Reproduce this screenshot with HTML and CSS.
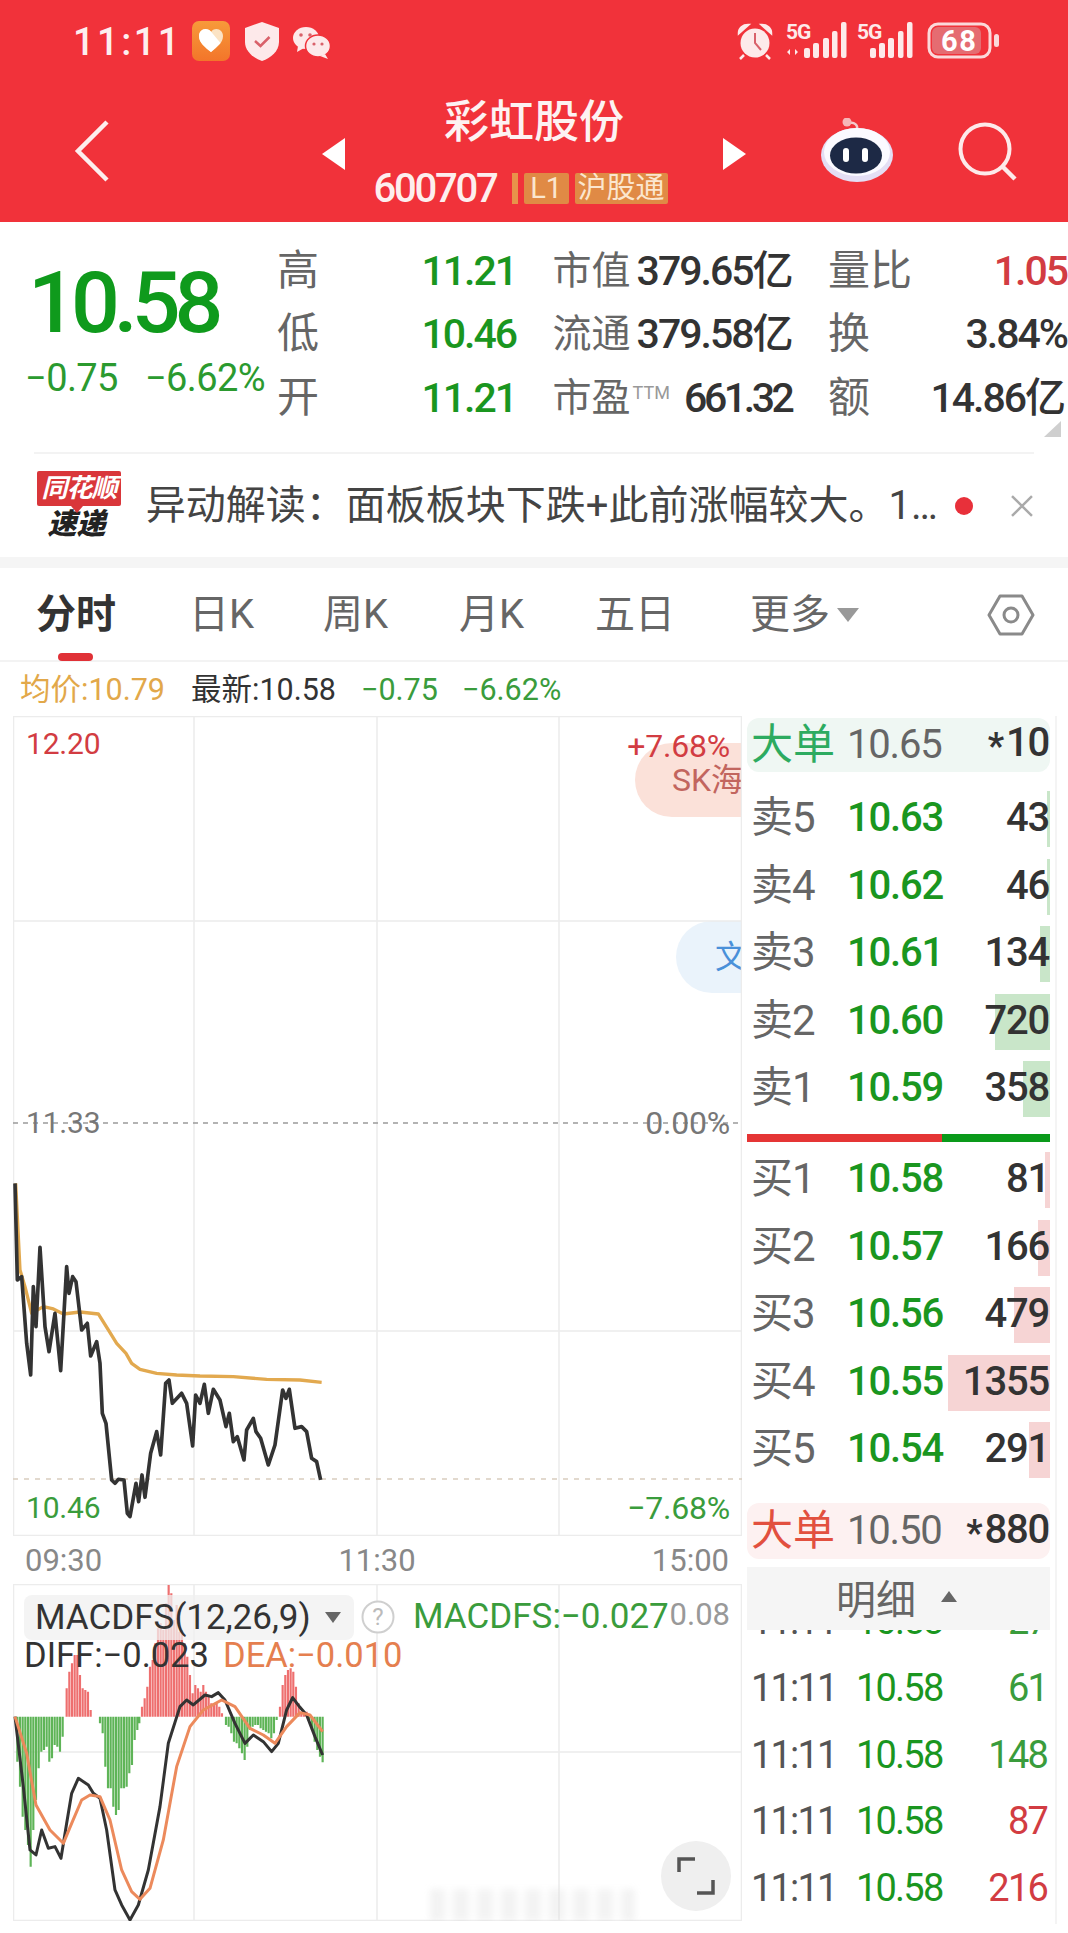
FILE: index.html
```html
<!DOCTYPE html>
<html lang="zh">
<head>
<meta charset="utf-8">
<title>彩虹股份</title>
<link rel="stylesheet" href="styles.css">
</head>
<body>
<div class="page">
  <header class="header">
    <div class="status">
      <span class="clock">11:11</span>
      <svg class="st-left" viewBox="190 18 142 46" width="142" height="46">
        <defs><linearGradient id="og" x1="0" y1="0" x2="0" y2="1"><stop offset="0" stop-color="#f79a3a"/><stop offset="1" stop-color="#f3752a"/></linearGradient></defs>
        <rect x="192" y="21" width="38" height="40" rx="7" fill="url(#og)"/>
        <path d="M211 52c-6-5-12-9-12-16 0-4 3-7 6.500-7 2.500 0 4.500 1 5.500 3 1-2 3-3 5.500-3 3.500 0 6.500 3 6.500 7 0 7-6 11-12 16z" fill="#fbe3c4"/>
        <path d="M211 52c-6-5-12-9-12-16 0-4 3-7 6.500-7 2 0 4 1 5 2l10 12c-3 3-6 6-9.500 9z" fill="#fff"/>
        <path d="M262 22l17 6v14c0 9-8 16-17 19-9-3-17-10-17-19V28z" fill="#fde9ea"/>
        <path d="M255 41l5.500 5 9-9" fill="none" stroke="#d9616a" stroke-width="2.500"/>
        <ellipse cx="306" cy="38" rx="13" ry="11" fill="#fde9ea"/>
        <path d="M298 46l-1 6 7-4z" fill="#fde9ea"/>
        <ellipse cx="318" cy="46" rx="12.500" ry="11" fill="#fde9ea" stroke="#f1323a" stroke-width="1.500"/>
        <path d="M325 54l3 5-8-3z" fill="#fde9ea"/>
        <circle cx="301" cy="35" r="1.800" fill="#d9616a"/><circle cx="310" cy="35" r="1.800" fill="#d9616a"/>
        <circle cx="314" cy="44" r="1.600" fill="#d9616a"/><circle cx="322" cy="44" r="1.600" fill="#d9616a"/>
      </svg>
      <svg class="st-right" viewBox="735 18 268 46" width="268" height="46">
        <circle cx="755" cy="43" r="14.500" fill="#fdeaea"/>
        <path d="M755 33v10l6 7" fill="none" stroke="#d9616a" stroke-width="2"/>
        <path d="M739 33c0-5 4-8 9-8zM771 33c0-5-4-8-9-8zM744 55l-4 4M766 55l4 4" fill="#fdeaea" stroke="#fdeaea" stroke-width="2.500"/>
        <text class="st-5g" x="786" y="39">5G</text>
        <path d="M790 49l-3 3 3 3zM795 49l3 3-3 3z" fill="#fdeaea"/>
        <g fill="#fdeaea">
          <rect x="804" y="48" width="6" height="10" rx="2"/><rect x="813" y="43" width="6" height="15" rx="2"/><rect x="823" y="38" width="6" height="20" rx="2"/><rect x="832" y="31" width="5.500" height="27" rx="2"/><rect x="841" y="22" width="5.500" height="36" rx="2"/>
          <rect x="870" y="48" width="6" height="10" rx="2"/><rect x="879" y="43" width="6" height="15" rx="2"/><rect x="888" y="38" width="6" height="20" rx="2"/><rect x="898" y="31" width="5.500" height="27" rx="2"/><rect x="907" y="22" width="5.500" height="36" rx="2"/>
        </g>
        <text class="st-5g" x="857" y="39">5G</text>
        <rect x="929" y="24" width="61" height="33" rx="9" fill="none" stroke="#fbd9da" stroke-width="3"/>
        <rect x="932" y="27" width="49" height="27" rx="6" fill="#e56c71"/>
        <text class="st-bat" x="941" y="51">68</text>
        <rect x="994" y="34" width="5" height="13" rx="2.500" fill="#fbd9da"/>
      </svg>
    </div>
    <div class="nav">
      <svg class="back" viewBox="0 0 36 62" width="36" height="62"><path d="M33 2L4 31l29 29" fill="none" stroke="#fdeeee" stroke-width="4.500"/></svg>
      <span class="tri tri-l"></span>
      <div class="nav-mid">
        <div class="title">彩虹股份</div>
        <div class="coderow">
          <span class="code">600707</span>
          <span class="code-bar"></span>
          <span class="badge badge-l1">L1</span>
          <span class="badge">沪股通</span>
        </div>
      </div>
      <span class="tri tri-r"></span>
      <svg class="robot" viewBox="821 118 72 66" width="72" height="66">
        <path d="M857 129c1-4-3-7-7-6" fill="none" stroke="#f3c9cc" stroke-width="2.500"/>
        <circle cx="847" cy="122" r="4.500" fill="#f6b6b8"/>
        <ellipse cx="857" cy="155" rx="36" ry="27" fill="#e4def4"/>
        <ellipse cx="857" cy="152" rx="33" ry="24" fill="#fbfaff"/>
        <ellipse cx="856" cy="155.500" rx="26" ry="18" fill="#1d2945"/>
        <rect x="843" y="148" width="6" height="14" rx="3" fill="#fff"/>
        <rect x="862" y="148" width="6" height="14" rx="3" fill="#fff"/>
      </svg>
      <svg class="search" viewBox="955 120 62 64" width="62" height="64">
        <circle cx="984" cy="150" r="24.500" fill="none" stroke="#fdeaea" stroke-width="4"/>
        <path d="M1001 167l13 13" stroke="#fdeaea" stroke-width="4.500"/>
      </svg>
    </div>
  </header>

  <section class="quote">
    <div class="q-left">
      <div class="q-price">10.58</div>
      <div class="q-change"><span>−0.75</span><span>−6.62%</span></div>
    </div>
    <div class="q-grid">
      <div class="cell"><span class="lab">高</span><span class="val grn">11.21</span></div>
      <div class="cell"><span class="lab lab-s">市值</span><span class="val">379.65亿</span></div>
      <div class="cell cell-over"><span class="lab">量比</span><span class="val red">1.05</span></div>
      <div class="cell"><span class="lab">低</span><span class="val grn">10.46</span></div>
      <div class="cell"><span class="lab lab-s">流通</span><span class="val">379.58亿</span></div>
      <div class="cell cell-over"><span class="lab">换</span><span class="val">3.84%</span></div>
      <div class="cell"><span class="lab">开</span><span class="val grn">11.21</span></div>
      <div class="cell"><span class="lab lab-s">市盈<sup class="ttm">TTM</sup></span><span class="val val-tight">661.32</span></div>
      <div class="cell cell-edge"><span class="lab">额</span><span class="val">14.86亿</span></div>
    </div>
    <span class="corner"></span>
  </section>

  <section class="news">
    <div class="logo">
      <div class="logo-top">同花顺</div>
      <div class="logo-bot">速递</div>
    </div>
    <div class="news-text">异动解读：面板板块下跌+此前涨幅较大。1…</div>
    <span class="dot"></span>
    <svg class="close" viewBox="0 0 24 24" width="24" height="24"><path d="M2 2l20 20M22 2L2 22" stroke="#aaa" stroke-width="2.500"/></svg>
  </section>
  <div class="band"></div>

  <nav class="tabs">
    <span class="tab active">分时</span>
    <span class="tab">日K</span>
    <span class="tab">周K</span>
    <span class="tab">月K</span>
    <span class="tab">五日</span>
    <span class="tab">更多<i class="tab-tri"></i></span>
    <svg class="hex" viewBox="0 0 48 44" width="48" height="44">
      <path d="M13 3h22l11 19-11 19H13L2 22z" fill="none" stroke="#8a8a8a" stroke-width="3" stroke-linejoin="round"/>
      <circle cx="24" cy="22" r="7" fill="none" stroke="#8a8a8a" stroke-width="3"/>
    </svg>
  </nav>

  <div class="info">
    <span class="avg">均价:10.79</span>
    <span class="latest">最新:10.58</span>
    <span class="grn2">−0.75</span>
    <span class="grn2">−6.62%</span>
  </div>

  <main class="main">
    <div class="left">
      <div class="chart">
        <div class="bubble bubble-sk">SK海</div>
        <div class="bubble bubble-wen">文</div>
        <svg class="plot" viewBox="13 716 729 820" width="729" height="820">
          <g stroke="#ececec" stroke-width="1.500" fill="none">
            <path d="M13 716.500H742M13 921H742M13 1331H742M13 1535.500H742M13.500 716V1536M194 716V1536M377 716V1536M559 716V1536M741.500 716V1536"/>
          </g>
          <path d="M13 1123H742" stroke="#9a9a9a" stroke-width="1.500" stroke-dasharray="5 5"/>
          <path d="M13 1479H742" stroke="#d9cdbf" stroke-width="1.500" stroke-dasharray="5 6"/>
          <g transform="translate(0 1160) scale(.3333)" fill="none" stroke-linejoin="round">
            <polyline stroke="#e2a94f" stroke-width="10" points="47,70 60,330 75,380 95,460 130,440 160,447 190,462 240,456 295,462 325,510 350,550 378,580 395,610 420,628 470,640 530,645 600,648 700,650 800,658 900,660 965,667"/>
            <polyline stroke="#333" stroke-width="11" points="45,70 52,360 65,350 80,550 92,645 100,380 108,500 120,262 135,500 147,575 165,460 182,632 200,320 207,400 218,350 228,365 245,510 262,490 272,588 290,545 300,610 307,760 318,790 335,960 345,970 355,958 372,960 382,1060 390,1070 408,970 416,1025 426,945 435,1012 452,880 470,815 482,885 497,670 507,660 517,730 545,700 560,730 578,858 587,705 600,730 613,673 625,760 640,688 660,720 678,800 688,760 700,845 712,830 732,900 740,810 760,775 768,815 782,835 805,915 825,855 848,690 858,715 868,688 885,805 905,800 920,815 935,895 950,905 962,960"/>
          </g>
        </svg>
        <span class="pl pl-1220 red">12.20</span>
        <span class="pr pr-top red">+7.68%</span>
        <span class="pl pl-mid">11.33</span>
        <span class="pr pr-mid">0.00%</span>
        <span class="pl pl-low grn2">10.46</span>
        <span class="pr pr-low grn2">−7.68%</span>
      </div>
      <div class="times"><span>09:30</span><span>11:30</span><span>15:00</span></div>
      <div class="macd">
        <svg class="plot" viewBox="13 1584 729 337" width="729" height="337">
          <path d="M13 1584.500H742M13 1752H742M13 1920.500H742M13.500 1584V1921M194 1584V1921M377 1584V1921M559 1584V1921M741.500 1584V1921" stroke="#ececec" stroke-width="1.500" fill="none"/>
          <g transform="translate(0 1560) scale(.3333)" fill="none">
            <path stroke="#5eb457" stroke-width="6.500" d="M52 470V605M60 470V680M68 470V770M76 470V810M84 470V855M92 470V920M100 470V810M108 470V720M116 470V625M124 470V575M132 470V570M140 470V560M148 470V605M156 470V595M164 470V555M172 470V560M180 470V575M188 470V530M300 470V490M308 470V520M316 470V620M324 470V685M332 470V685M340 470V740M348 470V765M356 470V750M364 470V685M372 470V685M380 470V680M388 470V640M396 470V615M404 470V540M412 470V510M418 470V490M678 470V495M686 470V500M694 470V520M702 470V545M710 470V550M718 470V565M726 470V580M734 470V600M742 470V560M750 470V510M758 470V500M766 470V495M774 470V495M782 470V505M790 470V510M798 470V515M806 470V520M814 470V535M822 470V520M830 470V480M928 470V480M936 470V510M944 470V545M952 470V570M960 470V590M968 470V607"/>
            <path stroke="#ee6f6f" stroke-width="6.500" d="M200 470V385M208 470V335M216 470V310M224 470V285M232 470V285M240 470V345M248 470V385M256 470V390M264 470V395M272 470V450M426 470V440M434 470V415M442 470V380M450 470V320M458 470V300M466 470V250M474 470V205M482 470V190M490 470V210M498 470V130M506 470V75M514 470V100M522 470V180M530 470V135M538 470V215M546 470V210M554 470V250M562 470V290M570 470V345M578 470V400M586 470V375M594 470V385M602 470V395M610 470V375M618 470V395M626 470V410M634 470V430M642 470V430M650 470V430M658 470V440M666 470V460M840 470V440M848 470V375M856 470V345M864 470V330M872 470V325M880 470V335M888 470V380M896 470V430M904 470V455M912 470V455M920 470V455"/>
            <polyline stroke="#333" stroke-width="9" stroke-linejoin="round" points="45,470 70,680 90,870 108,885 125,810 145,865 165,860 183,895 200,790 215,700 235,655 265,675 280,700 300,715 320,810 345,990 365,1035 390,1080 415,1035 445,930 480,740 505,550 540,440 560,420 580,435 615,405 635,410 655,398 675,420 705,490 735,550 760,525 790,545 815,575 835,550 860,450 878,413 900,442 920,465 945,530 968,585"/>
            <polyline stroke="#ec8a5c" stroke-width="9" stroke-linejoin="round" points="45,470 80,580 108,735 150,810 190,850 215,790 245,720 270,705 300,710 330,780 365,930 395,995 420,1018 450,985 490,840 530,620 570,500 610,450 665,420 705,440 750,505 790,525 825,550 860,500 900,458 930,465 968,515"/>
          </g>
        </svg>
        <div class="pill"><span>MACDFS(12,26,9)</span><i class="pill-tri"></i></div>
        <svg class="qmark" viewBox="0 0 34 34" width="34" height="34"><circle cx="17" cy="17" r="15.500" fill="#fff" stroke="#cfcfcf" stroke-width="2"/><text class="q-text" x="17" y="25">?</text></svg>
        <span class="m-green">MACDFS:−0.027</span>
        <span class="m-max">0.08</span>
        <span class="m-diff">DIFF:−0.023</span>
        <span class="m-dea">DEA:−0.010</span>
        <div class="wm"></div>
        <div class="expand">
          <svg viewBox="0 0 38 38" width="38" height="38"><path d="M2 15V2h16M36 23v13H20" fill="none" stroke="#555" stroke-width="3.500"/></svg>
        </div>
      </div>
    </div>

    <aside class="panel">
      <div class="big big-g"><span class="big-l">大单</span><span class="px gray">10.65</span><span class="vol"><b class="star">*</b>10</span></div>
      <div class="book book-s">
        <div class="row"><i class="vbar vbar-g" style="width:3px"></i><span class="r-l">卖5</span><span class="px">10.63</span><span class="vol">43</span></div>
        <div class="row"><i class="vbar vbar-g" style="width:3px"></i><span class="r-l">卖4</span><span class="px">10.62</span><span class="vol">46</span></div>
        <div class="row"><i class="vbar vbar-g" style="width:10px"></i><span class="r-l">卖3</span><span class="px">10.61</span><span class="vol">134</span></div>
        <div class="row"><i class="vbar vbar-g" style="width:55px"></i><span class="r-l">卖2</span><span class="px">10.60</span><span class="vol">720</span></div>
        <div class="row"><i class="vbar vbar-g" style="width:27px"></i><span class="r-l">卖1</span><span class="px">10.59</span><span class="vol">358</span></div>
      </div>
      <div class="ratio"><i class="ratio-r"></i><i class="ratio-g"></i></div>
      <div class="book book-b">
        <div class="row"><i class="vbar vbar-r" style="width:5px"></i><span class="r-l">买1</span><span class="px">10.58</span><span class="vol">81</span></div>
        <div class="row"><i class="vbar vbar-r" style="width:12px"></i><span class="r-l">买2</span><span class="px">10.57</span><span class="vol">166</span></div>
        <div class="row"><i class="vbar vbar-r" style="width:36px"></i><span class="r-l">买3</span><span class="px">10.56</span><span class="vol">479</span></div>
        <div class="row"><i class="vbar vbar-r" style="width:102px"></i><span class="r-l">买4</span><span class="px">10.55</span><span class="vol">1355</span></div>
        <div class="row"><i class="vbar vbar-r" style="width:21px"></i><span class="r-l">买5</span><span class="px">10.54</span><span class="vol">291</span></div>
      </div>
      <div class="big big-r"><span class="big-l">大单</span><span class="px gray">10.50</span><span class="vol"><b class="star">*</b>880</span></div>
      <div class="detail"><span>明细</span><i class="detail-tri"></i></div>
      <div class="ticks">
        <div class="tick tick-cut"><span class="t">11:11</span><span class="p">10.58</span><span class="v grn2">27</span></div>
        <div class="tick"><span class="t">11:11</span><span class="p">10.58</span><span class="v grn2">61</span></div>
        <div class="tick"><span class="t">11:11</span><span class="p">10.58</span><span class="v grn2">148</span></div>
        <div class="tick"><span class="t">11:11</span><span class="p">10.58</span><span class="v red">87</span></div>
        <div class="tick"><span class="t">11:11</span><span class="p">10.58</span><span class="v red">216</span></div>
      </div>
    </aside>
  </main>
</div>
</body>
</html>
```
FILE: styles.css
```css
* { box-sizing: border-box; }
html, body { margin: 0; padding: 0; background: #fff; }
body { font-family: Roboto, "Noto Sans CJK SC", sans-serif; color: #333; }
i { display: block; font-style: normal; }
.page { width: 1068px; height: 1933px; overflow: hidden; position: relative; }
.grn2 { color: #3a9c3c; }
.red { color: #d23c42; }
.gray { color: #666; }

/* header */
.header { height: 222px; background: #f1323a; color: #fdeeee; }
.status { height: 86px; display: flex; align-items: flex-start; padding: 17px 0 0 73px; }
.clock { width: 117px; font-size: 38px; line-height: 50px; letter-spacing: 2.5px; font-weight: 500; }
.st-left { margin-left: 0; display: block; margin-top: 1px; }
.st-right { margin-left: 403px; display: block; margin-top: 1px; }
.st-5g { font: 700 21px Roboto, sans-serif; fill: #fdeaea; letter-spacing: -1px; }
.st-bat { font: 700 29px Roboto, sans-serif; fill: #fff; letter-spacing: 1.5px; }
.nav { height: 136px; display: flex; align-items: center; padding-bottom: 6px; }
.back { margin-left: 74px; display: block; }
.tri { width: 0; height: 0; border-top: 16.5px solid transparent; border-bottom: 16.5px solid transparent; margin-top: 6px; }
.tri-l { margin-left: 212px; border-right: 23px solid #fff; }
.tri-r { border-left: 23px solid #fff; }
.nav-mid { width: 378px; align-self: flex-start; display: flex; flex-direction: column; align-items: center; padding-top: 12px; }
.title { font-size: 45px; line-height: 50px; font-weight: 500; color: #fdf2f2; }
.coderow { display: flex; align-items: center; height: 31px; margin-top: 25px; padding-right: 27px; }
.code { font-size: 40px; line-height: 31px; letter-spacing: -2.2px; margin-right: 15px; font-weight: 500; }
.code-bar { width: 6px; height: 31px; background: #e8934a; margin-right: 6px; }
.badge { height: 31px; line-height: 31px; background: #e08a45; color: #fbe6cf; font-size: 29px; padding: 0 3px; border-radius: 2px; width: 93px; text-align: center; letter-spacing: 0; }
.badge-l1 { width: 45px; margin-right: 6px; font-size: 29px; }
.robot { margin-left: 75px; display: block; }
.search { margin-left: 63px; display: block; }

/* quote */
.quote { height: 230px; position: relative; display: flex; padding-top: 17px; }
.q-left { width: 279px; padding: 20px 0 0 25px; }
.q-price { font-size: 86px; line-height: 88px; letter-spacing: -6px; color: #0f9a1c; padding-left: 3px; font-weight: 500; }
.q-change { display: flex; justify-content: space-between; width: 240px; margin-top: 9px; font-size: 38px; line-height: 44px; letter-spacing: -.6px; color: #2b9a2f; }
.q-grid { display: grid; grid-template-columns: repeat(3, 237px); column-gap: 38.5px; grid-auto-rows: 63.5px; }
.cell { display: flex; justify-content: space-between; align-items: center; white-space: nowrap; }
.cell-edge { padding-right: 3px; }
.lab { font-size: 42px; color: #666; line-height: 48px; margin-left: -2px; }
.lab-s { font-size: 39px; }
.val { font-size: 41px; letter-spacing: -2px; line-height: 48px; color: #333; font-weight: 500; }
.val.grn { color: #1a961f; }
.val.red { color: #d23c42; }
.val-tight { letter-spacing: -3.4px; }
.ttm { font-size: 18px; color: #999; vertical-align: 12px; line-height: 0; margin-left: 2px; }
.corner { position: absolute; right: 7px; bottom: 15px; width: 17px; height: 16px; background: #cfcfcf; clip-path: polygon(100% 0, 100% 100%, 0 100%); }

/* news */
.news { height: 105px; margin: 0 34px; border-top: 2px solid #f3f3f3; display: flex; align-items: center; position: relative; }
.logo { width: 84px; margin-left: 3px; height: 72px; margin-top: 3px; position: relative; }
.logo-top { height: 35px; background: #d9363a; color: #fff; font-size: 26px; line-height: 35px; font-style: italic; font-weight: 700; text-align: center; border-radius: 2px; letter-spacing: -1px; position: relative; }
.logo-top::after { content: ""; position: absolute; left: 34px; top: 35px; border-left: 6px solid transparent; border-right: 6px solid transparent; border-top: 7px solid #d9363a; }
.logo-bot { font-size: 29px; line-height: 36px; font-style: italic; font-weight: 900; color: #222; text-align: center; padding-right: 5px; }
.news-text { margin-left: 25px; width: 797px; font-size: 40px; line-height: 50px; color: #444; white-space: nowrap; }
.dot { width: 18px; height: 18px; border-radius: 50%; background: #e8303a; margin-left: 14px; }
.close { margin-left: 37px; display: block; }
.band { height: 11px; background: #f5f5f5; }

/* tabs */
.tabs { height: 94px; display: grid; grid-template-columns: 153px 134px 136px 136px 155px 237px 48px; padding: 24px 0 0 36px; border-bottom: 2px solid #f3f3f3; position: relative; }
.tab { font-size: 40px; line-height: 46px; color: #666; display: flex; align-items: center; height: 46px; }
.tab.active { color: #333; font-weight: 700; position: relative; }
.tab.active::after { content: ""; position: absolute; left: 22px; top: 61px; width: 35px; height: 8px; border-radius: 4px; background: #e03137; }
.tab-tri { width: 0; height: 0; margin-left: 7px; border-left: 11px solid transparent; border-right: 11px solid transparent; border-top: 14px solid #999; }
.hex { display: block; margin-top: 1px; }

/* info */
.info { height: 54px; display: grid; grid-template-columns: 171px 170px 101px 1fr; padding: 11px 0 0 20px; font-size: 30.5px; line-height: 34px; white-space: nowrap; }
.avg { color: #e2a84a; }
.latest { color: #333; }

/* main */
.main { display: flex; height: 1217px; padding-left: 13px; }
.left { width: 729px; }
.chart { height: 820px; position: relative; overflow: hidden; }
.plot { display: block; position: absolute; left: 0; top: 0; }
.pl, .pr { position: absolute; font-size: 30px; line-height: 34px; white-space: nowrap; letter-spacing: -.2px; }
.pr { right: 12px; font-size: 32px; }
.pl { left: 13px; }
.pl-1220 { top: 11px; }
.pr-top { top: 13px; }
.pl-mid { top: 390px; color: #777; }
.pr-mid { top: 390px; color: #777; }
.pl-low { top: 775px; }
.pr-low { top: 775px; }
.bubble { position: absolute; right: 0; overflow: hidden; white-space: nowrap; font-size: 32px; }
.bubble-sk { top: 27px; width: 107px; height: 74px; background: #fbe1d9; border-radius: 37px 0 0 37px; color: #c2655e; padding: 17px 0 0 37px; line-height: 40px; }
.bubble-wen { top: 205px; width: 66px; height: 72px; background: #eaf3fb; border-radius: 36px 0 0 36px; color: #4a90d9; padding: 16px 0 0 39px; line-height: 40px; }
.times { height: 48px; display: flex; justify-content: space-between; padding: 7px 13px 0 12px; font-size: 31px; line-height: 36px; color: #888; }
.macd { height: 337px; position: relative; overflow: hidden; }
.pill { position: absolute; left: 11px; top: 11px; width: 330px; height: 45px; background: rgba(240, 240, 240, .75); border-radius: 8px; display: flex; align-items: center; padding-left: 11px; font-size: 35px; color: #333; white-space: nowrap; }
.pill-tri { position: absolute; right: 13px; top: 17px; width: 0; height: 0; border-left: 8.5px solid transparent; border-right: 8.5px solid transparent; border-top: 11px solid #666; }
.qmark { position: absolute; left: 348px; top: 16px; display: block; }
.q-text { font: 400 24px Roboto, sans-serif; fill: #bbb; text-anchor: middle; }
.m-green, .m-max, .m-diff, .m-dea { position: absolute; white-space: nowrap; line-height: 40px; }
.m-green { left: 400px; top: 13px; font-size: 35px; color: #3a9c3c; }
.m-max { right: 12px; top: 11px; font-size: 31px; color: #999; }
.m-diff { left: 11px; top: 51px; font-size: 34.5px; color: #333; }
.m-dea { left: 210px; top: 51px; font-size: 34.5px; color: #e57f4f; }
.wm { position: absolute; left: 417px; top: 305px; width: 205px; height: 32px; background: repeating-linear-gradient(90deg, #ddd 0 14px, #f8f8f8 14px 24px); filter: blur(3px); opacity: .35; }
.expand { position: absolute; left: 648px; top: 257px; width: 70px; height: 70px; border-radius: 50%; background: #efefef; display: flex; align-items: center; justify-content: center; }
.expand svg { display: block; }

/* right panel */
.panel { width: 314px; margin-left: 1px; height: 1208px; border-right: 2px solid #f4f4f4; padding: 2px 5px 0 4px; }
.big { height: 54px; border-radius: 12px; display: grid; grid-template-columns: 96px 94px 1fr; padding: 0 1px 0 4px; align-items: center; white-space: nowrap; }
.big-g { background: #eff7f3; padding-bottom: 8px; }
.big-r { background: #fdf1f1; height: 56px; margin-top: 25px; }
.big-l { font-size: 42px; line-height: 46px; }
.big-g .big-l { color: #2dab60; }
.big-r .big-l { color: #e2503f; }
.star { font-weight: 700; font-size: 36px; margin-right: 3px; vertical-align: -2px; }
.book { display: flex; flex-direction: column; gap: 11.5px; }
.book-s { margin-top: 19px; }
.book-b { margin-top: 10px; }
.row { height: 56px; position: relative; display: grid; grid-template-columns: 96px 94px 1fr; padding: 0 1px 2px 4px; align-items: center; white-space: nowrap; }
.r-l, .row .px, .row .vol { position: relative; }
.r-l { font-size: 42px; color: #666; line-height: 50px; letter-spacing: -1px; }
.px { font-size: 40px; letter-spacing: -1.2px; color: #1a961f; line-height: 50px; font-weight: 500; }
.big .px { color: #666; font-weight: 400; }
.vol { font-size: 40px; letter-spacing: -1.2px; color: #333; text-align: right; line-height: 50px; font-weight: 500; }
.vbar { position: absolute; right: 0; top: 0; bottom: 0; }
.vbar-g { background: #c9e6c9; }
.vbar-r { background: #f6d4d4; }
.ratio { display: flex; height: 8px; margin-top: 17px; }
.ratio-r { width: 195px; background: #e53535; }
.ratio-g { flex: 1; background: #0a9a1a; }
.detail { height: 63px; margin-top: 8px; background: #f5f5f5; display: flex; align-items: center; padding: 0 0 4px 89px; font-size: 40px; color: #666; }
.detail-tri { width: 0; height: 0; margin-left: 25px; border-left: 8.5px solid transparent; border-right: 8.5px solid transparent; border-bottom: 11px solid #666; }
.ticks { height: 292px; overflow: hidden; margin: 0 -1px; }
.tick { height: 66.7px; display: grid; grid-template-columns: 105px 90px 1fr; padding: 0 4px 0 5px; align-items: center; font-size: 38px; letter-spacing: -1.8px; white-space: nowrap; }
.tick-cut { margin-top: -42px; }
.t { color: #555; }
.p { color: #1a961f; }
.v { text-align: right; }
```
